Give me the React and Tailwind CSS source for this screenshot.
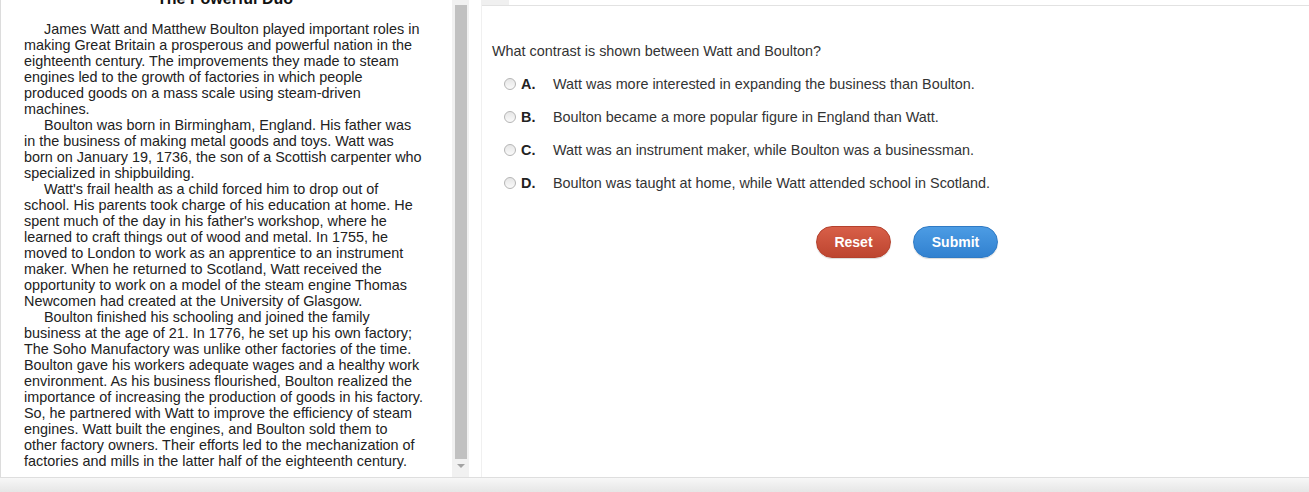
import React from "react";

const paras = [
  [
    "James Watt and Matthew Boulton played important roles in",
    "making Great Britain a prosperous and powerful nation in the",
    "eighteenth century. The improvements they made to steam",
    "engines led to the growth of factories in which people",
    "produced goods on a mass scale using steam-driven",
    "machines.",
  ],
  [
    "Boulton was born in Birmingham, England. His father was",
    "in the business of making metal goods and toys. Watt was",
    "born on January 19, 1736, the son of a Scottish carpenter who",
    "specialized in shipbuilding.",
  ],
  [
    "Watt's frail health as a child forced him to drop out of",
    "school. His parents took charge of his education at home. He",
    "spent much of the day in his father's workshop, where he",
    "learned to craft things out of wood and metal. In 1755, he",
    "moved to London to work as an apprentice to an instrument",
    "maker. When he returned to Scotland, Watt received the",
    "opportunity to work on a model of the steam engine Thomas",
    "Newcomen had created at the University of Glasgow.",
  ],
  [
    "Boulton finished his schooling and joined the family",
    "business at the age of 21. In 1776, he set up his own factory;",
    "The Soho Manufactory was unlike other factories of the time.",
    "Boulton gave his workers adequate wages and a healthy work",
    "environment. As his business flourished, Boulton realized the",
    "importance of increasing the production of goods in his factory.",
    "So, he partnered with Watt to improve the efficiency of steam",
    "engines. Watt built the engines, and Boulton sold them to",
    "other factory owners. Their efforts led to the mechanization of",
    "factories and mills in the latter half of the eighteenth century.",
  ],
];

const options = [
  ["A.", "Watt was more interested in expanding the business than Boulton."],
  ["B.", "Boulton became a more popular figure in England than Watt."],
  ["C.", "Watt was an instrument maker, while Boulton was a businessman."],
  ["D.", "Boulton was taught at home, while Watt attended school in Scotland."],
];

export default function App() {
  return (
    <div
      className="w-[1309px] h-[492px] overflow-hidden flex flex-col bg-white"
      style={{ fontFamily: '"Liberation Sans", Arial, sans-serif' }}
    >
      <div className="flex flex-1 min-h-0">
        {/* Left passage panel */}
        <div className="w-[452px] border-l border-[#dcdcdc] overflow-hidden bg-white">
          <div className="w-[410px] ml-[23px]">
            <div className="w-[402px] mt-[-10px] h-[18px] leading-[18px] text-[16px] font-bold text-center text-[#111]">
              The Powerful Duo
            </div>
            <div className="mt-[13px] text-[14.4px] leading-[16px] text-[#222]">
              {paras.map((p, i) => (
                <div key={i}>
                  {p.map((l, j) => (
                    <div
                      key={j}
                      className={"whitespace-nowrap " + (j === 0 ? "pl-[20px]" : "")}
                    >
                      {l}
                    </div>
                  ))}
                </div>
              ))}
            </div>
          </div>
        </div>
        {/* Scrollbar */}
        <div className="w-[17px] bg-[#f1f1f1] flex flex-col items-center pt-[5px] pb-[4px]">
          <div className="w-[12px] flex-1 bg-[#c1c1c1]" />
          <div className="h-[14px] flex items-center justify-center">
            <div className="w-0 h-0 border-l-[4px] border-r-[4px] border-t-[4px] border-l-transparent border-r-transparent border-t-[#a3a3a3]" />
          </div>
        </div>
        <div className="w-[13px] bg-white border-r border-[#f0f0f0]" />
        {/* Right question panel */}
        <div className="flex-1 flex flex-col">
          <div className="h-[6px] border-b border-[#e2e2e2] flex">
            <div className="w-[27px] h-full bg-[#f0f0f0]" />
          </div>
          <div className="pl-[10px] pt-[37px] text-[14.4px] text-[#333]">
            <div className="leading-[16px]">What contrast is shown between Watt and Boulton?</div>
            <div className="mt-[9px] flex flex-col">
              {options.map(([l, t]) => (
                <div key={l} className="h-[33px] flex items-center pl-[12px]">
                  <div className="w-[12px] h-[12px] rounded-full border border-[#b5b5b5] bg-gradient-to-b from-[#e6e6e6] to-[#fafafa] mr-[5px] mt-[-2px]" />
                  <span className="w-[32px] font-bold text-[#222]">{l}</span>
                  <span className="text-[#333]">{t}</span>
                </div>
              ))}
            </div>
            <div className="mt-[26px] flex gap-[22px] pl-[324px]">
              <button className="w-[75px] h-[32px] rounded-full bg-gradient-to-b from-[#d85f48] to-[#bd4530] border border-[#b4412d] text-white font-bold text-[14px] shadow-[0_1px_1px_rgba(0,0,0,0.15)]">
                Reset
              </button>
              <button className="w-[85px] h-[32px] rounded-full bg-gradient-to-b from-[#4c9ce4] to-[#3181d0] border border-[#2f7ac4] text-white font-bold text-[14px] shadow-[0_1px_1px_rgba(0,0,0,0.15)]">
                Submit
              </button>
            </div>
          </div>
        </div>
      </div>
      {/* Bottom bar */}
      <div className="h-[15px] border-t border-[#dedede] bg-gradient-to-b from-[#f7f7f7] to-[#e6e6e6]" />
    </div>
  );
}
